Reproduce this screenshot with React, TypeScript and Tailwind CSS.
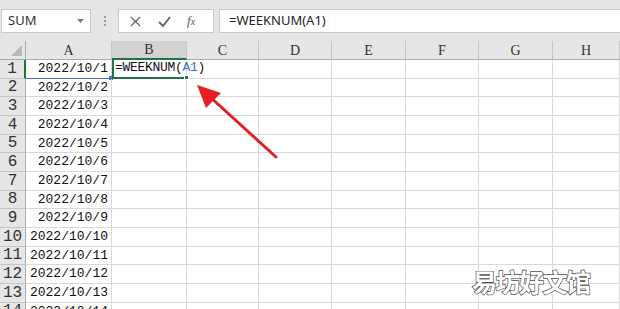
import React from 'react';

const cols = ['A', 'B', 'C', 'D', 'E', 'F', 'G', 'H'];
const rows = Array.from({ length: 14 }, (_, i) => i + 1);

export default function App() {
  return (
    <div className="relative w-[620px] h-[309px] overflow-hidden bg-white font-['Liberation_Sans',sans-serif]">
      {/* toolbar */}
      <div className="flex h-[41px] items-start bg-[#e6e6e6] pt-[9px]">
        <div className="ml-[1px] flex h-[24px] w-[90px] items-center justify-between border border-[#c8c8c8] bg-white pl-[6px] pr-[6px]">
          <span className="text-[13px] text-[#333] font-['Noto_Sans',sans-serif]">SUM</span>
          <svg width="7" height="5" viewBox="0 0 7 5"><path d="M0 0h7L3.5 4z" fill="#7a7a7a" /></svg>
        </div>
        <div className="flex h-[24px] w-[27px] flex-col items-center justify-center gap-[2px]">
          <span className="h-[2px] w-[2px] bg-[#9a9a9a]" />
          <span className="h-[2px] w-[2px] bg-[#9a9a9a]" />
          <span className="h-[2px] w-[2px] bg-[#9a9a9a]" />
        </div>
        <div className="flex h-[24px] w-[96px] items-center border border-[#c8c8c8] bg-white">
          <svg className="ml-[11px]" width="11" height="11" viewBox="0 0 11 11"><path d="M1 1l9 9M10 1l-9 9" stroke="#666" strokeWidth="1.3" /></svg>
          <svg className="ml-[17px]" width="13" height="11" viewBox="0 0 13 11"><path d="M1 6l4 4 7-9" stroke="#666" strokeWidth="2" fill="none" /></svg>
          <span className="ml-[16px] font-['Liberation_Serif',serif] text-[13px] italic text-[#555]">f<span className="text-[10px]">x</span></span>
        </div>
        <div className="ml-[5px] flex h-[24px] flex-1 items-center border border-r-0 border-[#c8c8c8] bg-white pl-[9px]">
          <span className="text-[13px] text-[#222] font-['Noto_Sans',sans-serif]">=WEEKNUM(A1)</span>
        </div>
      </div>

      {/* sheet */}
      <div className="grid grid-cols-[26px_86px_75px_72px_73px_74px_73px_74px_1fr] grid-rows-[19px_repeat(14,18.67px)]">
        <div className="relative border-r border-b border-[#ababab] bg-[#e6e6e6]">
          <svg className="absolute right-[3px] bottom-[3px]" width="11" height="11" viewBox="0 0 11 11"><path d="M11 0v11H0z" fill="#b9b9b9" /></svg>
        </div>
        {cols.map((c) => (
          <div
            key={c}
            className={`flex items-center justify-center border-r border-[#c6c6c6] font-['Liberation_Serif',serif] text-[14px] text-[#333] ${c === 'B' ? 'border-b-2 border-b-[#217346] bg-[#d2d2d2]' : 'border-b border-b-[#ababab] bg-[#e6e6e6]'}`}
          >
            {c}
          </div>
        ))}
        {rows.map((r) => (
          <React.Fragment key={r}>
            <div className={`flex items-center justify-center border-b border-[#c6c6c6] bg-[#e6e6e6] font-['Liberation_Mono',monospace] text-[16px] text-[#333] ${r === 1 ? 'border-r-2 border-r-[#217346]' : 'border-r border-r-[#ababab]'}`}>
              {r}
            </div>
            <div className={`relative flex items-center justify-end border-r border-b border-[#d9d9d9] pr-[3px] font-['Liberation_Mono',monospace] text-[13px] text-[#111] ${r === 1 ? 'border-b-[#4472c4]' : ''}`}>
              2022/10/{r}
              {r === 1 && <span className="absolute right-[-2px] bottom-[-2px] h-[4px] w-[4px] bg-[#4472c4]" />}
            </div>
            <div className={`relative flex items-center border-r border-b border-[#d9d9d9] ${r === 1 ? 'border-l-2 border-l-[#217346] border-b-2 border-b-[#217346] z-10' : ''}`}>
              {r === 1 && (
                <>
                  <span className="absolute left-[1px] top-1/2 -translate-y-1/2 whitespace-nowrap font-['Liberation_Mono',monospace] text-[13px] tracking-[-0.3px] text-[#111]">
                    =WEEKNUM(<span className="text-[#4472c4]">A1</span>)
                  </span>
                  <span className="absolute right-[-3px] bottom-[-3px] h-[5px] w-[5px] border border-white bg-[#217346]" />
                </>
              )}
            </div>
            {['C', 'D', 'E', 'F', 'G', 'H'].map((c) => (
              <div key={c} className="border-r border-b border-[#d9d9d9]" />
            ))}
          </React.Fragment>
        ))}
      </div>

      {/* arrow */}
      <svg className="absolute left-0 top-0" width="620" height="309" viewBox="0 0 620 309">
        <line x1="276" y1="157" x2="209" y2="96" stroke="#e3201f" strokeWidth="3" strokeLinecap="round" />
        <path d="M197 85L221 93L206 108z" fill="#e3201f" />
      </svg>

      {/* watermark */}
      <div className="absolute left-[472px] top-[263px] font-['Noto_Sans_CJK_SC',sans-serif] text-[25px] font-bold tracking-[-1.5px] text-white [-webkit-text-stroke:1.4px_#505050] [paint-order:stroke_fill]">
        易坊好文馆
      </div>
    </div>
  );
}
